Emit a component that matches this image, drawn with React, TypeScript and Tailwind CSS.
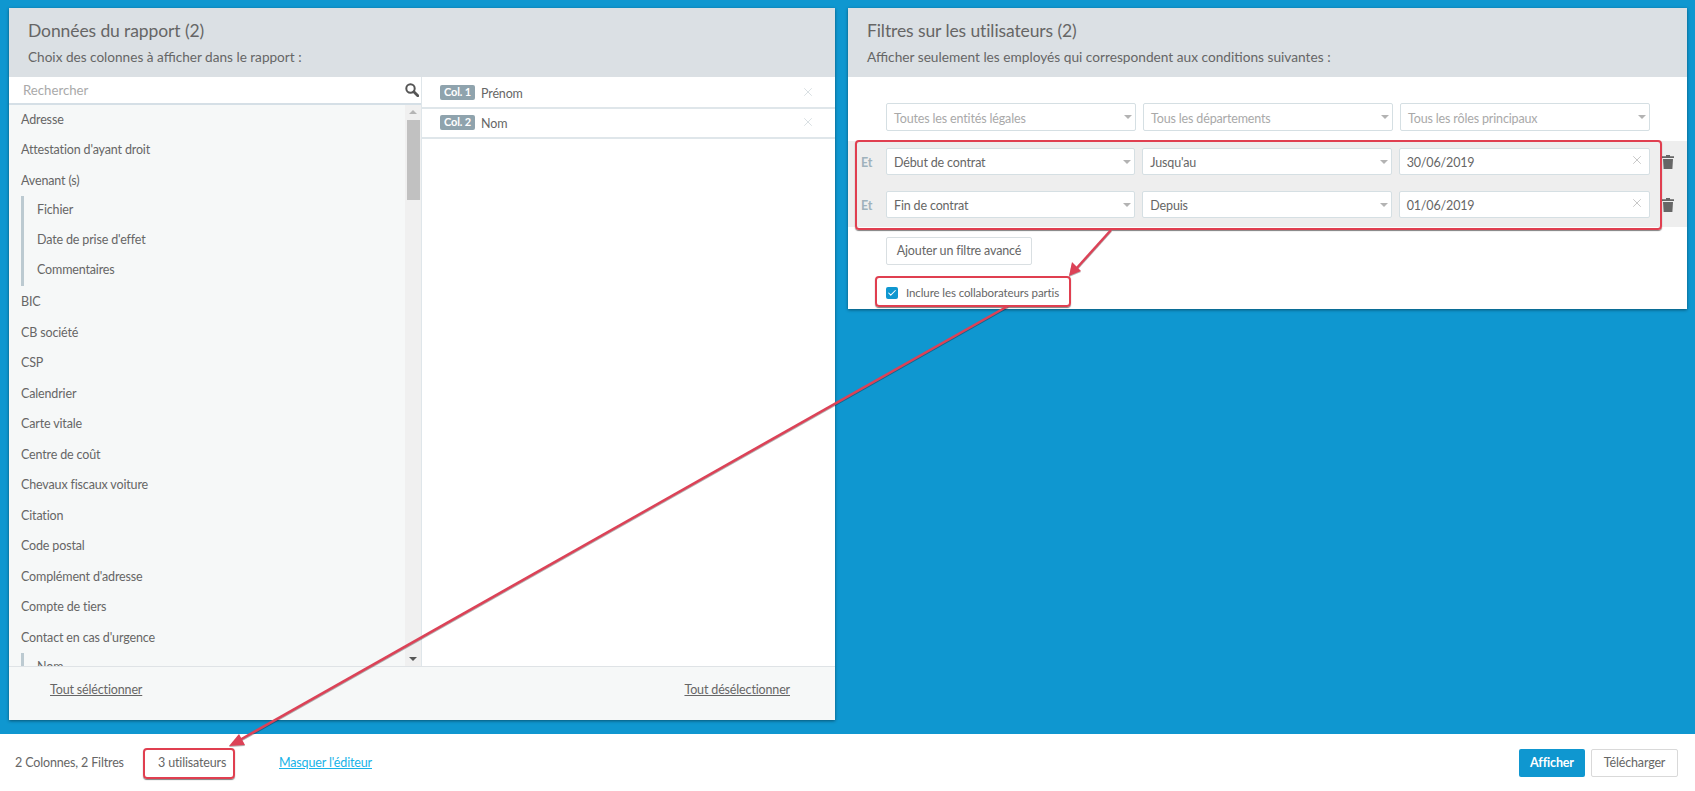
import { X, Check } from 'lucide-react'

const columns = [
  { label: 'Adresse' },
  { label: "Attestation d'ayant droit" },
  { label: 'Avenant (s)', children: ['Fichier', "Date de prise d'effet", 'Commentaires'] },
  { label: 'BIC' },
  { label: 'CB société' },
  { label: 'CSP' },
  { label: 'Calendrier' },
  { label: 'Carte vitale' },
  { label: 'Centre de coût' },
  { label: 'Chevaux fiscaux voiture' },
  { label: 'Citation' },
  { label: 'Code postal' },
  { label: "Complément d'adresse" },
  { label: 'Compte de tiers' },
  { label: "Contact en cas d'urgence", children: ['Nom'] },
]

function Caret() {
  return <span className="h-0 w-0 border-x-[4px] border-t-[4px] border-x-transparent border-t-[#b3b3b3]" />
}

function SearchIcon() {
  return (
    <svg width="14" height="14" viewBox="0 0 14 14" fill="none">
      <circle cx="5.5" cy="5.5" r="4.2" stroke="#555" strokeWidth="2" />
      <path d="M8.8 8.8 L12.8 12.8" stroke="#555" strokeWidth="2.8" strokeLinecap="round" />
    </svg>
  )
}

function TrashIcon() {
  return (
    <svg className="ml-[12px]" width="12" height="14" viewBox="0 0 12 14" fill="#666">
      <path d="M4 0 H8 V1.2 H12 V3 H0 V1.2 H4 Z" />
      <path d="M1 4 H11 L10.4 14 H1.6 Z" />
    </svg>
  )
}

function SelectBox({ label, placeholder }: { label: string; placeholder?: boolean }) {
  return (
    <div className={`flex flex-1 items-center justify-between rounded-[2px] border border-[#d5dfe3] bg-white pl-[7px] pr-[3px] ${placeholder ? 'h-[28px] text-[#a9a9a9]' : 'h-[27px] text-[#666]'}`}>
      <span className="pt-[3px] leading-[16px]">{label}</span>
      <Caret />
    </div>
  )
}

function DateBox({ value }: { value: string }) {
  return (
    <div className="flex h-[27px] flex-1 items-center justify-between rounded-[2px] border border-[#d5dfe3] bg-white pl-[7px] pr-[5px] text-[#666]">
      <span className="pt-[3px] leading-[16px]">{value}</span>
      <X className="mb-[3px] h-[14px] w-[14px] text-[#a9a9a9]" strokeWidth={1.1} />
    </div>
  )
}

function FilterRow({ first, second, date }: { first: string; second: string; date: string }) {
  return (
    <div className="flex items-center">
      <span className="w-[38px] pl-[13px] pt-[3px] font-bold leading-[16px] text-[#9fb2bc]">Et</span>
      <div className="flex w-[764px] gap-[7px]">
        <SelectBox label={first} />
        <SelectBox label={second} />
        <DateBox value={date} />
      </div>
      <TrashIcon />
    </div>
  )
}

function ColumnRow({ badge, name, h }: { badge: string; name: string; h: string }) {
  return (
    <div className={`flex items-start border-b-2 border-[#dfe6ea] pl-[18px] pr-[20px] ${h}`}>
      <span className="flex h-[15px] w-[35px] items-center justify-center rounded-[2px] bg-[#8fa3ad] text-[11px] font-bold text-white">{badge}</span>
      <span className="ml-[6px] text-[#666]">{name}</span>
      <X className="ml-auto h-[14px] w-[14px] text-[#c5ced3]" strokeWidth={1.1} />
    </div>
  )
}

export default function App() {
  return (
    <div className="relative flex h-[791px] w-[1695px] flex-col overflow-hidden bg-[#0f97d0] font-['Lato',sans-serif] text-[12.5px] tracking-[-0.15px] text-[#666]">
      {/* Panels */}
      <div className="flex h-[734px] gap-[13px] pl-[9px] pt-[8px]">
        <section className="flex h-[712px] w-[826px] flex-col bg-white shadow-[0_1px_3px_rgba(0,0,0,0.45)]">
          <header className="h-[69px] bg-[#dbe0e4] pl-[19px] pt-[10px]">
            <h1 className="text-[17.5px] leading-[26px] tracking-[-0.1px] text-[#666]">Données du rapport (2)</h1>
            <p className="mt-[4px] text-[13.6px] leading-[18px] tracking-normal">Choix des colonnes à afficher dans le rapport :</p>
          </header>
          <div className="flex h-0 flex-1">
            <div className="flex w-[413px] flex-col border-r border-[#dfe6ea]">
              <div className="flex h-[28px] items-center justify-between border-b-2 border-[#d5dfe6] pl-[14px] pr-[2px]">
                <span className="pt-[1px] text-[13.2px] tracking-normal text-[#a9a9a9]">Rechercher</span>
                <SearchIcon />
              </div>
              <div className="flex h-0 flex-1 bg-[#f6f8f8]">
                <ul className="flex-1 overflow-hidden pl-[12px]">
                  {columns.map((col) => (
                    <li key={col.label} className={col.label === 'Avenant (s)' ? 'pb-[2px]' : ''}>
                      <div className="flex h-[30.5px] items-center">{col.label}</div>
                      {col.children && (
                        <div className="-mt-[1px]">
                          {col.children.map((child) => (
                            <div key={child} className="flex h-[30px] items-center border-l-[3px] border-[#bccad1] pl-[13px]">{child}</div>
                          ))}
                        </div>
                      )}
                    </li>
                  ))}
                </ul>
                <div className="flex w-[16px] flex-col items-center bg-[#f0f0f0] pt-[5px]">
                  <span className="h-0 w-0 border-x-[4px] border-b-[4px] border-x-transparent border-b-[#b5b5b5]" />
                  <div className="mt-[6px] h-[80px] w-[13px] bg-[#c1c1c1]" />
                  <span className="mb-[5px] mt-auto h-0 w-0 border-x-[4px] border-t-[4px] border-x-transparent border-t-[#555]" />
                </div>
              </div>
            </div>
            <div className="flex-1">
              <ColumnRow badge="Col. 1" name="Prénom" h="h-[32px] pt-[8px]" />
              <ColumnRow badge="Col. 2" name="Nom" h="h-[30px] pt-[6px]" />
            </div>
          </div>
          <footer className="flex h-[54px] items-start justify-between border-t border-[#dfe3e6] bg-[#f6f8f8] pl-[41px] pr-[45px] pt-[14px] underline">
            <span>Tout séléctionner</span>
            <span>Tout désélectionner</span>
          </footer>
        </section>

        <section className="h-[301px] w-[839px] bg-white shadow-[0_1px_3px_rgba(0,0,0,0.45)]">
          <header className="h-[69px] bg-[#dbe0e4] pl-[19px] pt-[10px]">
            <h2 className="text-[17.5px] leading-[26px] tracking-[-0.1px] text-[#666]">Filtres sur les utilisateurs (2)</h2>
            <p className="mt-[4px] text-[13.7px] leading-[18px] tracking-normal">Afficher seulement les employés qui correspondent aux conditions suivantes :</p>
          </header>
          <div className="ml-[38px] flex w-[764px] gap-[7px] pt-[26px]">
            <SelectBox label="Toutes les entités légales" placeholder />
            <SelectBox label="Tous les départements" placeholder />
            <SelectBox label="Tous les rôles principaux" placeholder />
          </div>
          <div className="mt-[10px] flex h-[86px] flex-col gap-[16px] bg-[#eeeeee] pt-[7px]">
            <FilterRow first="Début de contrat" second="Jusqu'au" date="30/06/2019" />
            <FilterRow first="Fin de contrat" second="Depuis" date="01/06/2019" />
          </div>
          <button className="ml-[38px] mt-[10px] flex h-[28px] w-[146px] items-center justify-center rounded-[2px] border border-[#d9dfe2] pt-[1px] text-[#666]">
            Ajouter un filtre avancé
          </button>
          <label className="ml-[38px] mt-[19px] flex items-center gap-[8px] text-[11.5px] tracking-[-0.1px]">
            <span className="flex h-[12px] w-[12px] items-center justify-center rounded-[2px] bg-[#0f97d0]">
              <Check className="h-[10px] w-[10px] text-white" strokeWidth={2.5} />
            </span>
            Inclure les collaborateurs partis
          </label>
        </section>
      </div>

      {/* Bottom bar */}
      <div className="flex h-[57px] items-center bg-white pl-[15px] pr-[17px]">
        <span className="w-[143px] pt-[2px]">2 Colonnes, 2 Filtres</span>
        <span className="w-[121px] pt-[2px]">3 utilisateurs</span>
        <span className="pt-[2px] text-[#17b3e8] underline">Masquer l'éditeur</span>
        <div className="ml-auto flex gap-[6px]">
          <button className="h-[28px] w-[66px] rounded-[2px] bg-[#0f97d0] pt-[2px] font-bold text-white">Afficher</button>
          <button className="h-[28px] w-[87px] rounded-[2px] border border-[#d9d9d9] pt-[2px] text-[#666]">Télécharger</button>
        </div>
      </div>

      {/* Annotations */}
      <div className="absolute left-[855px] top-[140px] h-[90px] w-[807px] rounded-[4px] border-2 border-[#e03f50] shadow-[0_1px_1px_rgba(0,0,0,0.5)]" />
      <div className="absolute left-[875px] top-[276px] h-[31px] w-[196px] rounded-[4px] border-2 border-[#e03f50] shadow-[0_1px_1px_rgba(0,0,0,0.5)]" />
      <div className="absolute left-[143px] top-[748px] h-[31px] w-[92px] rounded-[4px] border-2 border-[#e03f50] shadow-[0_1px_1px_rgba(0,0,0,0.5)]" />
      <svg className="pointer-events-none absolute left-0 top-0 drop-shadow-[0_1px_0_rgba(0,0,0,0.3)]" width="1695" height="791" fill="none">
        <path d="M1111 230 L1075 270" stroke="#dc4257" strokeWidth="2.5" />
        <path d="M1069 276 L1072 262 L1081 271 Z" fill="#dc4257" />
        <path d="M1008 306 L238 741" stroke="#dc4257" strokeWidth="2.5" />
        <path d="M229 746 L239 734 L245 745 Z" fill="#dc4257" />
      </svg>
    </div>
  )
}
